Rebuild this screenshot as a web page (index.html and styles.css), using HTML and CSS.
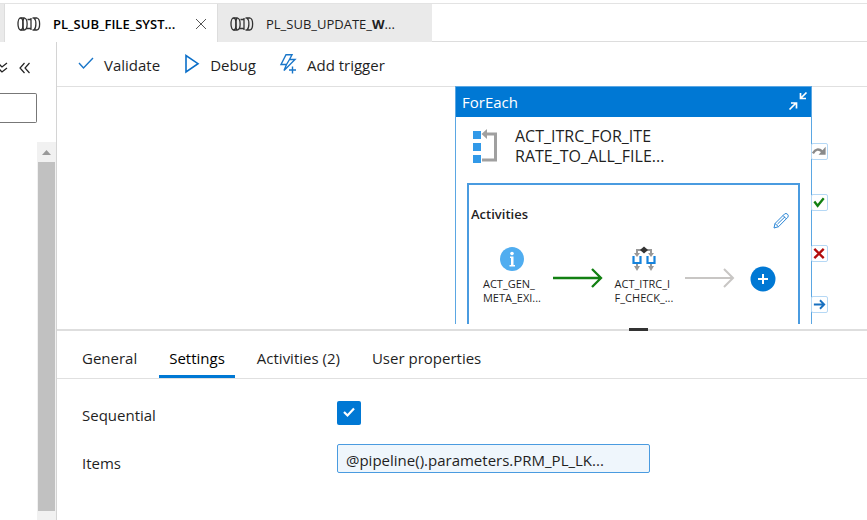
FILE: index.html
```html
<!DOCTYPE html>
<html lang="en">
<head>
<meta charset="utf-8">
<title>Pipeline editor</title>
<link rel="stylesheet" href="styles.css">
</head>
<body>
<svg class="defs" aria-hidden="true">
  <symbol id="pipeline" viewBox="0 0 24 16">
    <g fill="none" stroke="#333" stroke-width="1.3">
      <ellipse cx="3.5" cy="8" rx="2.5" ry="6"/>
      <path d="M3.500 2H7.500C11 3 11 13 7.500 14H3.500M10.500 3.500H14M9.500 12.500H14.500M14 2V14M15.500 2H20C23.500 3 23.500 13 20 14H15.500M17 2C19.500 4 19.500 12 17 14M7 2C5.500 4 5.500 12 7 14"/>
    </g>
  </symbol>
</svg>
<header class="file-tabs">
  <div class="file-tab active">
    <svg class="pipe"><use href="#pipeline"/></svg>
    <a href="#file">PL_SUB_FILE_SYST...</a>
    <button class="close" aria-label="Close tab"><svg width="12" height="12" viewBox="0 0 12 12"><path d="M1 1L11 11M11 1L1 11" fill="none" stroke="#555"/></svg></button>
  </div>
  <div class="file-tab">
    <svg class="pipe"><use href="#pipeline"/></svg>
    <a href="#update">PL_SUB_UPDATE_<b>W</b>...</a>
  </div>
  <div class="tab-rest"></div>
</header>
<div class="workspace">
  <aside class="sidebar">
    <div class="side-actions">
      <button aria-label="Expand all"><svg width="10" height="12" viewBox="0 0 10 12"><path d="M0 1L4 5L9 1M0 6L4 10L9 6" transform="translate(-2 0)" fill="none" stroke="#222" stroke-width="1.3"/></svg></button>
      <button aria-label="Collapse panel"><svg width="12" height="12" viewBox="0 0 12 12"><path d="M5.500 1L1 6L5.500 11M10.500 1L6 6L10.500 11" fill="none" stroke="#222" stroke-width="1.2"/></svg></button>
    </div>
    <input class="side-search" type="text" aria-label="Filter resources">
    <div class="scrollbar">
      <svg width="19" height="20" viewBox="0 0 19 20"><path d="M5 13L9.500 8L14 13Z" fill="#999"/></svg>
      <div class="thumb"></div>
    </div>
  </aside>
  <main class="editor">
    <div class="toolbar">
      <button><svg width="16" height="20" viewBox="0 0 16 20"><path d="M1 9L5.500 14L15 4" fill="none" stroke="#1976c9" stroke-width="1.400"/></svg>Validate</button>
      <button><svg width="16" height="20" viewBox="0 0 16 20"><path d="M2 1.500V18L14 9.700Z" fill="none" stroke="#0b6fc9" stroke-width="1.600"/></svg>Debug</button>
      <button><svg width="17" height="20" viewBox="1 0 17 20"><path d="M7 .8H13L10.500 5.500H16L5 16.500L7.500 10.500H2Z M10.500 5.500L7.500 10.500M13.500 12.500V19.500M10 16H17" fill="none" stroke="#1976c9" stroke-width="1.400"/></svg>Add trigger</button>
    </div>
    <section class="canvas">
      <article class="node">
        <header class="node-head"><span>ForEach</span>
          <button aria-label="Collapse"><svg width="22" height="22" viewBox="0 0 22 22"><path d="M19.500 1.500L14 7M13.500 2V7.500H19M2.500 18.500L9 12M4 12H9.500V17.500" fill="none" stroke="#fff" stroke-width="1.700"/></svg></button>
        </header>
        <div class="node-title">
          <svg width="26" height="34" viewBox="0 0 26 34"><path d="M1 1H9V9H1ZM1 13H9V21H1ZM1 25H9V33H1Z" fill="#3199e8"/><path d="M10 30H23.500V4H14" fill="none" stroke="#a0a0a0" stroke-width="3"/><path d="M9.500 4L15 -1V9Z" fill="#a0a0a0"/></svg>
          <h2>ACT_ITRC_FOR_ITE<br>RATE_TO_ALL_FILE...</h2>
        </div>
        <div class="inner">
          <div class="inner-head"><h3>Activities</h3>
            <button aria-label="Edit activities"><svg width="18" height="18" viewBox="0 0 18 18"><path d="M2 16L3 11.500L12.500 2Q14 .8 15.500 2.200Q17 3.800 15.800 5.300L6.500 14.700ZM3 11.500L6.500 14.700M11 3.500L14.300 6.800M5.500 12L13 4.800" fill="none" stroke="#2b86d6" stroke-width="1"/></svg></button>
          </div>
          <div class="flow">
            <div class="activity">
              <svg width="26" height="26" viewBox="0 0 26 26"><circle cx="13" cy="13" r="12" fill="#50adf0"/><path d="M11 10.500H14.500V19H16V20.500H10.500V19H12V12H11Z" fill="#fff"/><circle cx="13" cy="7.500" r="1.800" fill="#fff"/></svg>
              <span>ACT_GEN_<br>META_EXI...</span>
            </div>
            <svg class="link" viewBox="0 0 50 20"><path d="M0 10H48M39 1L48 10L39 19" fill="none" stroke="#128012" stroke-width="2.300"/></svg>
            <div class="activity">
              <svg width="26" height="26" viewBox="0 0 26 26"><path d="M6 8V4H20V8M6 17V22M20 17V22" fill="none" stroke="#999" stroke-width="2"/><path d="M3 7H9L6 11ZM17 7H23L20 11ZM3 20H9L6 25ZM17 20H23L20 25Z" fill="#999"/><path d="M13 .5L17 4L13 7.500L9 4Z" fill="#333"/><path d="M2.500 10V17H9.500V10M16.500 10V17H23.500V10" fill="none" stroke="#1683dc" stroke-width="2.200"/></svg>
              <span>ACT_ITRC_I<br>F_CHECK_...</span>
            </div>
            <svg class="link" viewBox="0 0 50 20"><path d="M0 10H48M39 1L48 10L39 19" fill="none" stroke="#c8c6c4" stroke-width="2"/></svg>
            <button class="add" aria-label="Add activity"><svg width="26" height="26" viewBox="0 0 26 26"><circle cx="13" cy="13" r="12.500" fill="#0078d4"/><path d="M8 13H18M13 8V18" stroke="#fff" stroke-width="2"/></svg></button>
          </div>
        </div>
        <div class="ports">
          <button aria-label="On skip"><svg viewBox="0 0 16 16"><path d="M1 10Q5 3 11 8" fill="none" stroke="#8a8a8a" stroke-width="2.500"/><path d="M14.500 3V11.500H7Z" fill="#8a8a8a"/></svg></button>
          <button aria-label="On success"><svg viewBox="0 0 16 16"><path d="M2.500 7L6 11.500L12.500 3.500" fill="none" stroke="#128012" stroke-width="2.500"/></svg></button>
          <button aria-label="On failure"><svg viewBox="0 0 16 16"><path d="M2.500 3L12.500 13M12.500 3L2.500 13" stroke="#b30c0c" stroke-width="2.500"/></svg></button>
          <button aria-label="On completion"><svg viewBox="0 0 16 16"><path d="M2 8H13M8.500 3.500L13 8L8.500 12.500" fill="none" stroke="#1870c0" stroke-width="2"/></svg></button>
        </div>
      </article>
    </section>
    <div class="splitter"><span></span></div>
    <nav class="panel-tabs">
      <a href="#general">General</a>
      <a class="active" href="#settings">Settings</a>
      <a href="#activities">Activities (2)</a>
      <a href="#user">User properties</a>
    </nav>
    <form class="settings">
      <label for="sequential">Sequential</label>
      <span class="check"><input id="sequential" type="checkbox" checked><svg viewBox="0 0 24 24"><path d="M7 11L10.500 14.500L17 7.500" fill="none" stroke="#fff" stroke-width="2.200"/></svg></span>
      <label for="items">Items</label>
      <input id="items" class="expression" type="text" value="@pipeline().parameters.PRM_PL_LK...">
    </form>
  </main>
</div>
</body>
</html>
```
FILE: styles.css
```css
* { box-sizing: border-box; }
body {
  margin: 0;
  height: 100vh;
  display: flex;
  flex-direction: column;
  overflow: hidden;
  background: #fff;
  color: #1f1f1f;
  font: 15px/20px "Open Sans", "Noto Sans", sans-serif;
}
button {
  display: flex;
  align-items: center;
  padding: 0;
  border: 0;
  background: none;
  color: inherit;
  font: inherit;
}
a { color: inherit; text-decoration: none; }
h2, h3 { margin: 0; }
svg { display: block; flex: none; overflow: visible; }
.defs { position: absolute; width: 0; height: 0; }

.file-tabs {
  display: flex;
  height: 39px;
  margin-top: 3px;
  padding-left: 4px;
  border-top: 1px solid #e3e3e3;
  background: linear-gradient(to right, #eaeaea 4px, #fff 4px);
}
.file-tab {
  display: flex;
  align-items: center;
  width: 214px;
  padding: 1px 10px 0 12px;
  background: #eaeaea;
  font-size: 13px;
}
.file-tab.active {
  border-left: 1px solid #ddd;
  border-right: 1px solid #ddd;
  background: #fff;
  color: #000;
  font-weight: 600;
}
.pipe { width: 24px; height: 16px; margin-right: 12px; }
.close { margin-left: auto; }
.tab-rest { flex: 1; border-bottom: 1px solid #ddd; }

.workspace { flex: 1; display: flex; min-height: 0; }
.sidebar {
  display: flex;
  flex-direction: column;
  width: 57px;
  border-right: 1px solid #d4d4d4;
}
.side-actions { display: flex; gap: 9px; padding: 20px 0 19px; }
.side-search {
  width: 37px;
  height: 30px;
  border: 1px solid #777;
  border-left: 0;
  border-radius: 0 2px 2px 0;
}
.scrollbar {
  flex: 1;
  display: flex;
  flex-direction: column;
  width: 19px;
  margin: 19px 0 0 auto;
  padding-bottom: 9px;
  background: #f1f1f1;
}
.thumb { flex: 1; margin: 0 1px; background: #c1c1c1; }

.editor { flex: 1; display: flex; flex-direction: column; min-width: 0; }
.toolbar {
  display: flex;
  gap: 24px;
  height: 45px;
  padding: 2px 20px 0 21px;
  border-bottom: 1px solid #e0e0e0;
}
.toolbar button { gap: 10px; }
.toolbar svg { margin-top: -2px; }
.canvas { position: relative; height: 242px; }

.node {
  position: absolute;
  top: -1px;
  left: 398px;
  width: 357px;
  height: 238px;
  display: flex;
  flex-direction: column;
  border: 1px solid #5ba7e3;
  border-bottom: 0;
  background: #fff;
}
.node-head {
  display: flex;
  justify-content: space-between;
  align-items: center;
  height: 30px;
  padding: 0 2px 0 6px;
  background: #0078d4;
  color: #fff;
}
.node-title { display: flex; gap: 17px; padding: 9px 16px 17px; }
.node-title svg { margin-top: 4px; }
.node-title h2 { font-size: 16px; font-weight: 400; }
.inner {
  flex: 1;
  margin: 0 11px;
  border: 2px solid #4a9be0;
  border-bottom: 0;
}
.inner-head {
  display: flex;
  justify-content: space-between;
  padding: 19px 8px 0 2px;
}
.inner-head h3 { font-size: 13px; font-weight: 600; }
.inner-head button { margin-top: 8px; }
.flow { display: flex; align-items: flex-start; padding: 16px 0 0 13px; }
.activity {
  display: flex;
  flex-direction: column;
  align-items: center;
  gap: 5px;
  width: 60px;
  font-size: 11px;
  line-height: 14px;
}
.link { width: 50px; height: 20px; margin: 22px 11px 0; }
.add { margin: 20px 0 0 4px; }

.ports {
  position: absolute;
  top: 56px;
  left: 355px;
  display: flex;
  flex-direction: column;
  gap: 34px;
}
.ports button {
  width: 17px;
  height: 17px;
  border: 1px solid #b5d8f5;
  border-radius: 2px;
  background: #fff;
}
.ports svg { width: 15px; height: 15px; }

.splitter {
  display: flex;
  justify-content: flex-end;
  height: 2px;
  padding-right: 27%;
  background: #dedede;
}
.splitter span {
  width: 19px;
  height: 3px;
  margin-top: -1px;
  background: #333;
}
.panel-tabs {
  display: flex;
  gap: 12px;
  height: 48px;
  padding-left: 15px;
  border-bottom: 1px solid #e0e0e0;
}
.panel-tabs a {
  display: flex;
  align-items: center;
  padding: 10px 10px 0;
  border-bottom: 3px solid transparent;
}
.panel-tabs .active { border-color: #0078d4; color: #000; }
.settings {
  display: grid;
  grid-template-columns: 255px minmax(0, 313px);
  row-gap: 19px;
  align-items: end;
  padding: 22px 25px;
}
.check { position: relative; width: 24px; height: 24px; }
.check input {
  display: block;
  appearance: none;
  width: 24px;
  height: 24px;
  margin: 0;
  border-radius: 2px;
  background: #0078d4;
}
.check svg { position: absolute; inset: 0; pointer-events: none; }
.expression {
  height: 29px;
  padding: 2px 8px 0;
  border: 1px solid #4a9be0;
  border-radius: 2px;
  background: #eff6fc;
  color: inherit;
  font: inherit;
}
```
